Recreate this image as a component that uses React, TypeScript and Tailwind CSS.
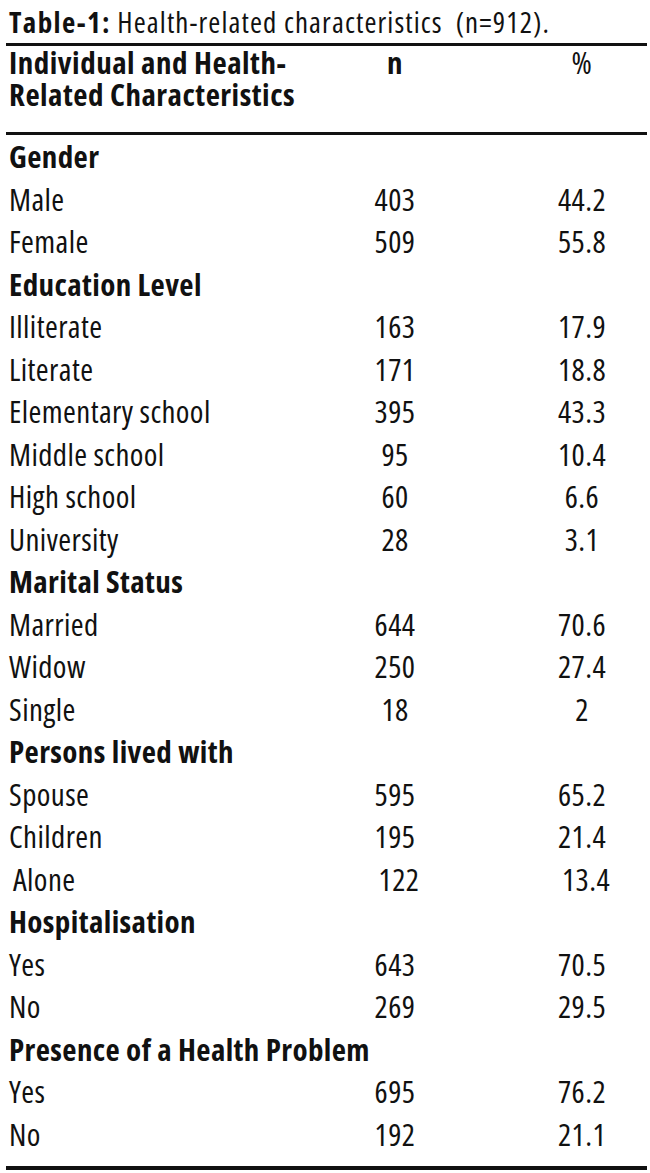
type Row = { head?: string; label?: string; n?: string; p?: string; shift?: boolean }

const rows: Row[] = [
  { head: 'Gender' },
  { label: 'Male', n: '403', p: '44.2' },
  { label: 'Female', n: '509', p: '55.8' },
  { head: 'Education Level' },
  { label: 'Illiterate', n: '163', p: '17.9' },
  { label: 'Literate', n: '171', p: '18.8' },
  { label: 'Elementary school', n: '395', p: '43.3' },
  { label: 'Middle school', n: '95', p: '10.4' },
  { label: 'High school', n: '60', p: '6.6' },
  { label: 'University', n: '28', p: '3.1' },
  { head: 'Marital Status' },
  { label: 'Married', n: '644', p: '70.6' },
  { label: 'Widow', n: '250', p: '27.4' },
  { label: 'Single', n: '18', p: '2' },
  { head: 'Persons lived with' },
  { label: 'Spouse', n: '595', p: '65.2' },
  { label: 'Children', n: '195', p: '21.4' },
  { label: 'Alone', n: '122', p: '13.4', shift: true },
  { head: 'Hospitalisation' },
  { label: 'Yes', n: '643', p: '70.5' },
  { label: 'No', n: '269', p: '29.5' },
  { head: 'Presence of a Health Problem' },
  { label: 'Yes', n: '695', p: '76.2' },
  { label: 'No', n: '192', p: '21.1' },
]

export default function App() {
  return (
    <div className="w-[650px] min-h-[1173px] bg-white text-[#111] font-['Open_Sans',sans-serif] [font-stretch:condensed]">
      {/* caption */}
      <p className="pl-[9px] pt-[7px] text-[29px] leading-[29px] whitespace-pre tracking-[1.1px]">
        <b className="tracking-[1.4px]">Table-1:</b> Health-related characteristics  (n=912).
      </p>

      <div className="ml-[6px] mr-[3px] mt-[7px]">
        <div className="border-t-[3px] border-[#111]" />

        {/* header */}
        <div className="grid grid-cols-[339px_100px_87px_100px] pb-[22px] text-[31px] leading-[32px] tracking-[0.5px]">
          <div className="pl-[3px] font-bold">
            <div>Individual and Health-</div>
            <div>Related Characteristics</div>
          </div>
          <div className="text-center font-bold">n</div>
          <div />
          <div className="text-center">%</div>
        </div>

        <div className="border-t-[3px] border-[#111]" />

        {/* body */}
        <div className="grid grid-cols-[339px_100px_87px_100px] text-[31px] leading-[42.5px] tracking-[0.4px]">
          {rows.map((r, i) =>
            r.head ? (
              <div key={i} className="col-span-4 pl-[3px] font-bold">
                {r.head}
              </div>
            ) : (
              <div key={i} className={r.shift ? 'col-span-4 grid grid-cols-subgrid translate-x-[4px]' : 'col-span-4 grid grid-cols-subgrid'}>
                <div className="pl-[3px]">{r.label}</div>
                <div className="text-center">{r.n}</div>
                <div />
                <div className="text-center">{r.p}</div>
              </div>
            )
          )}
        </div>

        <div className="mt-[11px] border-t-4 border-[#111]" />
      </div>
    </div>
  )
}
